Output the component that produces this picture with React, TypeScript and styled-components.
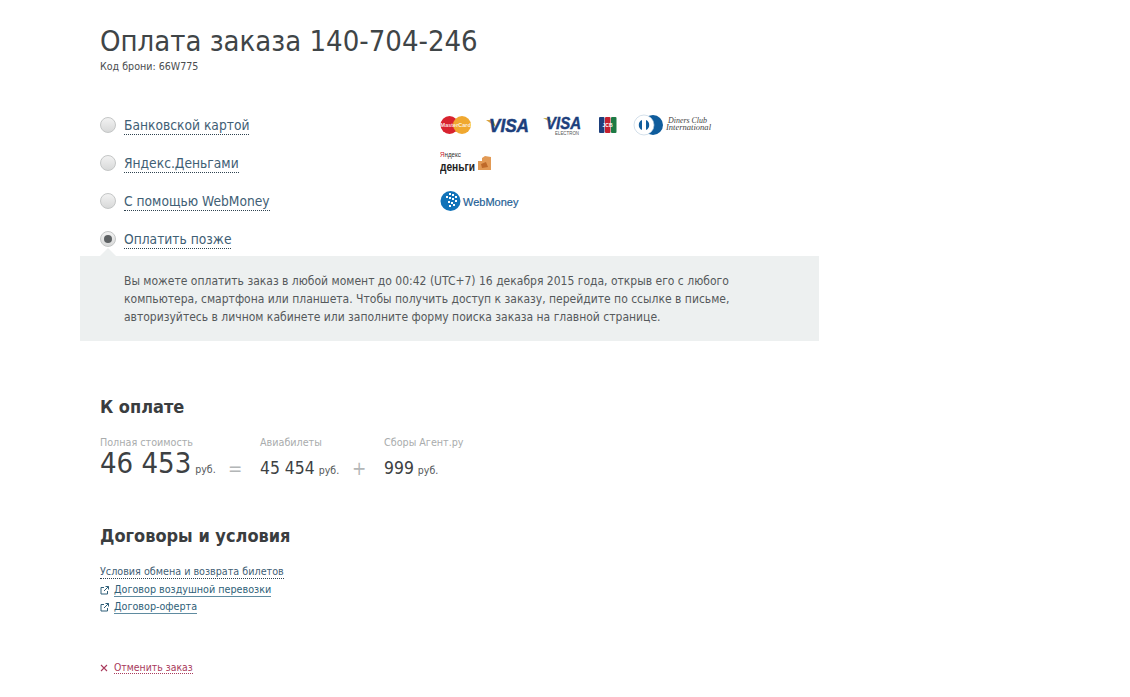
import React from "react";
import styled, { createGlobalStyle } from "styled-components";

const Global = createGlobalStyle`
  html, body { margin: 0; padding: 0; background: #fff; }
  body { font-family: "DejaVu Sans Condensed", "DejaVu Sans", sans-serif; font-stretch: condensed; color: #3c4042; }
`;
const Page = styled.main`
  width: 1130px; height: 697px; box-sizing: border-box; padding: 22px 0 0 100px; overflow: hidden;
`;
const Title = styled.h1`
  margin: 0; font-size: 29px; line-height: 38px; font-weight: 400; color: #3f4547;
`;
const Code = styled.div`
  font-size: 10.6px; line-height: 14px; color: #4a4d4f; margin-top: -1px;
`;
const Methods = styled.div`
  margin-top: 33px; margin-bottom: -2px; display: flex; flex-direction: column;
`;
const Method = styled.div`
  height: 38px; display: flex; align-items: center;
`;
const Radio = styled.span<{ $on?: boolean }>`
  width: 16px; height: 16px; box-sizing: border-box; border-radius: 50%; flex: none;
  border: 1px solid #c4c6c6; background: linear-gradient(#f2f2f2, #d8d9d9);
  display: flex; align-items: center; justify-content: center; margin-right: 8px;
  &::after { content: ""; display: ${(p) => (p.$on ? "block" : "none")}; width: 8px; height: 8px; border-radius: 50%; background: #5d6163; }
`;
const MethodLabel = styled.span`
  width: 316px; flex: none; font-size: 13.7px; line-height: 18px; color: #3f6075;
`;
const Dotted = styled.span`
  border-bottom: 1px dotted #2f4350; padding-bottom: 1px;
`;
const Logos = styled.div`
  display: flex; align-items: center;
`;
const Panel = styled.div`
  position: relative; margin-left: -20px; width: 739px; height: 85px; box-sizing: border-box;
  background: #edf0f0; padding: 16px 44px; font-size: 12px; line-height: 18px; color: #55595b; white-space: nowrap;
  &::before {
    content: ""; position: absolute; left: 20px; top: -8px; width: 0; height: 0;
    border-left: 8px solid transparent; border-right: 8px solid transparent; border-bottom: 8px solid #edf0f0;
  }
`;
const Heading = styled.h2`
  margin: 0; font-size: 18px; line-height: 24px; font-weight: 700; color: #3a3d3f;
`;
const PayHeading = styled(Heading)`
  margin-top: 54px;
`;
const Terms = styled(Heading)`
  margin-top: 38px;
`;
const Sums = styled.div`
  display: flex; margin-top: 17px; height: 50px;
`;
const Sum = styled.div<{ $w: number }>`
  width: ${(p) => p.$w}px; flex: none;
`;
const SumLabel = styled.div`
  font-size: 10.7px; line-height: 14px; color: #a9acad; white-space: nowrap;
`;
const SumValue = styled.div<{ $big?: boolean }>`
  font-size: ${(p) => (p.$big ? 29 : 17.4)}px; line-height: 30px; color: #3d4143; white-space: nowrap;
  margin-top: ${(p) => (p.$big ? -2 : 3)}px;
`;
const Cur = styled.span`
  font-size: 10.5px; margin-left: 4px; color: #55595b;
`;
const Op = styled.div`
  width: 30px; flex: none; margin-left: -2px; margin-right: 2px; padding-top: 17px; font-size: 19px; line-height: 30px; color: #b3b6b7;
`;
const LinkList = styled.div`
  margin-top: 16px; display: flex; flex-direction: column;
`;
const LinkRow = styled.div`
  height: 17.5px; display: flex; align-items: center; font-size: 10.7px; color: #2f5f78; gap: 5px;
`;
const Solid = styled.span`
  border-bottom: 1px solid #5f8ba0; line-height: 12px;
`;
const DottedLink = styled.span`
  border-bottom: 1px dotted #2f4350; line-height: 12px; color: #3f6075;
`;
const Cancel = styled.div`
  margin-top: 42px; height: 18px; display: flex; align-items: center; gap: 6px; font-size: 10.4px; color: #a93a5c;
`;
const CancelText = styled.span`
  border-bottom: 1px dotted #a93a5c; line-height: 12px;
`;

const Ext = () => (
  <svg width="9" height="9" viewBox="0 0 9 9" fill="none" stroke="#2f5f78" strokeWidth="1">
    <path d="M4 1.5H1v6.5h6.5V5M4 5l4.5-4.5M5.5.5h3v3" />
  </svg>
);

const CardLogos = () => (
  <svg width="274" height="24" viewBox="0 0 274 24">
    <circle cx="9.5" cy="12" r="9" fill="#d8232f" />
    <circle cx="22" cy="12" r="9" fill="#f0a830" />
    <text x="15.7" y="14" fontSize="5.5" fontWeight="700" fill="#fff" fillOpacity="0.85" textAnchor="middle" fontFamily="Liberation Sans">MasterCard</text>
    <path d="M46 7h7l3 7z" fill="#d9a441" />
    <text x="49" y="19" fontSize="18" fontWeight="700" fontStyle="italic" fill="#1d3f7c" stroke="#1d3f7c" strokeWidth="0.5" fontFamily="Liberation Sans" textLength="40" lengthAdjust="spacingAndGlyphs">VISA</text>
    <path d="M103 5h6l3 5z" fill="#c9b24a" />
    <text x="106" y="16" fontSize="16" fontWeight="700" fontStyle="italic" fill="#1d3f7c" stroke="#1d3f7c" strokeWidth="0.4" fontFamily="Liberation Sans" textLength="35" lengthAdjust="spacingAndGlyphs">VISA</text>
    <text x="115" y="22" fontSize="5" fill="#555" fontFamily="Liberation Sans" textLength="24" lengthAdjust="spacingAndGlyphs">ELECTRON</text>
    <rect x="159" y="4" width="5.5" height="16" rx="1" fill="#1d3f7c" />
    <rect x="165" y="4" width="5.5" height="16" rx="1" fill="#c4202f" />
    <rect x="171" y="4" width="5.5" height="16" rx="1" fill="#1d7a44" />
    <text x="167.5" y="14" fontSize="5" fontWeight="700" fill="#fff" textAnchor="middle" fontFamily="Liberation Sans">JCB</text>
    <circle cx="213" cy="12" r="10" fill="#0f5c9c" />
    <circle cx="204" cy="12" r="10" fill="#fff" stroke="#b7cbdb" strokeWidth="0.6" />
    <path d="M202 7a5.5 5.5 0 0 0 0 10zM206 7a5.5 5.5 0 0 1 0 10z" fill="#0f5c9c" />
    <text x="228" y="10" fontSize="8" fontStyle="italic" fill="#444" fontFamily="Liberation Serif" textLength="39" lengthAdjust="spacingAndGlyphs">Diners Club</text>
    <text x="226" y="17" fontSize="8" fontStyle="italic" fill="#444" fontFamily="Liberation Serif" textLength="45" lengthAdjust="spacingAndGlyphs">International</text>
  </svg>
);

const YandexLogo = () => (
  <svg width="52" height="26" viewBox="0 0 52 26">
    <text x="0" y="7" fontSize="7" fill="#333" fontFamily="Liberation Sans" textLength="21" lengthAdjust="spacingAndGlyphs"><tspan fill="#c8202c">Я</tspan>ндекс</text>
    <text x="0" y="20.5" fontSize="13.5" fontWeight="700" fill="#222" fontFamily="Liberation Sans" textLength="35" lengthAdjust="spacingAndGlyphs">деньги</text>
    <path d="M38 11l4 0 0-3 3-2 6 1 0 13-13 0z" fill="#e29a55" />
    <path d="M41 14l5-2 2 5-6 1z" fill="#bf6a2a" />
  </svg>
);

const WebMoneyLogo = () => (
  <svg width="80" height="24" viewBox="0 0 80 24">
    <circle cx="10.5" cy="12" r="10" fill="#1173b9" />
    <g fill="#fff">
      <rect x="9" y="4" width="2" height="2" />
      <rect x="12" y="5" width="2" height="2" />
      <rect x="15" y="7" width="2" height="2" />
      <rect x="6" y="7" width="2" height="2" />
      <rect x="9" y="8" width="2" height="2" />
      <rect x="12" y="9" width="2" height="2" />
      <rect x="15" y="11" width="2" height="2" />
      <rect x="8" y="12" width="2" height="2" />
      <rect x="11" y="13" width="2" height="2" />
      <rect x="13" y="15" width="2" height="2" />
      <rect x="9" y="16" width="2" height="2" />
    </g>
    <text x="23" y="16.5" fontSize="11" fill="#1f5f96" stroke="#1f5f96" strokeWidth="0.2" fontFamily="Liberation Sans">WebMoney</text>
  </svg>
);

export default function App() {
  return (
    <Page>
      <Global />
      <Title>Оплата заказа 140-704-246</Title>
      <Code>Код брони: 66W775</Code>
      <Methods>
        <Method>
          <Radio />
          <MethodLabel><Dotted>Банковской картой</Dotted></MethodLabel>
          <Logos><CardLogos /></Logos>
        </Method>
        <Method>
          <Radio />
          <MethodLabel><Dotted>Яндекс.Деньгами</Dotted></MethodLabel>
          <Logos><YandexLogo /></Logos>
        </Method>
        <Method>
          <Radio />
          <MethodLabel><Dotted>С помощью WebMoney</Dotted></MethodLabel>
          <Logos><WebMoneyLogo /></Logos>
        </Method>
        <Method>
          <Radio $on />
          <MethodLabel><Dotted>Оплатить позже</Dotted></MethodLabel>
        </Method>
      </Methods>
      <Panel>
        Вы можете оплатить заказ в любой момент до 00:42 (UTC+7) 16 декабря 2015 года, открыв его с любого<br />
        компьютера, смартфона или планшета. Чтобы получить доступ к заказу, перейдите по ссылке в письме,<br />
        авторизуйтесь в личном кабинете или заполните форму поиска заказа на главной странице.
      </Panel>
      <PayHeading>К оплате</PayHeading>
      <Sums>
        <Sum $w={130}>
          <SumLabel>Полная стоимость</SumLabel>
          <SumValue $big>46 453<Cur>руб.</Cur></SumValue>
        </Sum>
        <Op>=</Op>
        <Sum $w={94}>
          <SumLabel>Авиабилеты</SumLabel>
          <SumValue>45 454<Cur>руб.</Cur></SumValue>
        </Sum>
        <Op>+</Op>
        <Sum $w={100}>
          <SumLabel>Сборы Агент.ру</SumLabel>
          <SumValue>999<Cur>руб.</Cur></SumValue>
        </Sum>
      </Sums>
      <Terms>Договоры и условия</Terms>
      <LinkList>
        <LinkRow><DottedLink>Условия обмена и возврата билетов</DottedLink></LinkRow>
        <LinkRow><Ext /><Solid>Договор воздушной перевозки</Solid></LinkRow>
        <LinkRow><Ext /><Solid>Договор-оферта</Solid></LinkRow>
      </LinkList>
      <Cancel>
        <svg width="8" height="8" viewBox="0 0 8 8" stroke="#a93a5c" strokeWidth="1.1"><path d="M1 1l6 6M7 1l-6 6" /></svg>
        <CancelText>Отменить заказ</CancelText>
      </Cancel>
    </Page>
  );
}
